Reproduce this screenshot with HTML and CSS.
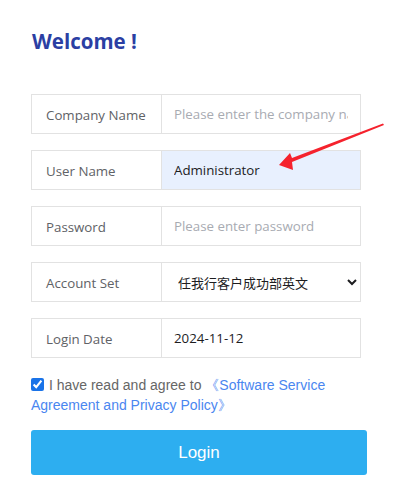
FILE: index.html
```html
<!DOCTYPE html>
<html lang="en">
<head>
    <meta charset="UTF-8">
    <meta name="viewport" content="width=device-width, initial-scale=1.0">
    <title>Login</title>
    <link rel="stylesheet" href="styles.css">
</head>
<body>
    <form action="" id="login">
        <h1 class="title">Welcome !</h1>
        <div class="rows">
            <div class="row">
                <label>Company Name</label>
                <input type="text" placeholder="Please enter the company name">
            </div>
            <div class="row">
                <label>User Name</label>
                <input class="filled" type="text" value="Administrator">
            </div>
            <div class="row">
                <label>Password</label>
                <input type="password" placeholder="Please enter password">
            </div>
            <div class="row">
                <label>Account Set</label>
                <select>
                    <option>任我行客户成功部英文</option>
                </select>
            </div>
            <div class="row">
                <label>Login Date</label>
                <input type="text" value="2024-11-12">
            </div>
        </div>
        <div class="agree">
            <input type="checkbox" checked>
            I have read and agree to <a href="#">《Software Service Agreement and Privacy Policy》</a>
        </div>
        <button class="submit" type="submit">Login</button>
    </form>
    <svg class="arrow" width="404" height="483" viewBox="0 0 404 483">
        <polygon fill="#f5222d" points="383,123.5 384,125 292,162 293,170 279,165 290,153 292,158"/>
    </svg>
</body>
</html>
```

FILE: styles.css
```css
*{
    box-sizing: border-box;
}
body{
    margin: 0;
    background: #fff;
    font-family: "Open Sans", "Noto Sans CJK SC", sans-serif;
}
#login{
    width: 336px;
    margin-left: 31px;
    padding-top: 27px;
}
.title{
    margin: 0 0 0 1px;
    font-size: 20.5px;
    line-height: 28px;
    font-weight: bold;
    color: #2b3fa3;
}
.rows{
    display: flex;
    flex-direction: column;
    gap: 16px;
    margin-top: 39px;
    width: 330px;
}
.row{
    display: flex;
    height: 40px;
    border: 1px solid #e2e2e2;
}
.row label{
    width: 130px;
    flex: none;
    border-right: 1px solid #e2e2e2;
    padding: 11px 0 0 14px;
    font-size: 13.3px;
    color: #606266;
}
.row input, .row select{
    flex: 1;
    min-width: 0;
    border: none;
    outline: none;
    padding: 0 12px;
    font-size: 13.3px;
    font-family: "Open Sans", "Noto Sans CJK SC", sans-serif;
    color: #1d1d1f;
    background: #fff;
}
.row input::placeholder{
    color: #a8abb2;
}
.row input.filled{
    background: #e8f0fe;
}
.row select{
    padding: 0 4px 0 12px;
    font-size: 13px;
    font-family: "Noto Sans CJK SC", sans-serif;
}
.agree{
    margin-top: 17px;
    font-family: "Liberation Sans", Arial, sans-serif;
    font-size: 14px;
    line-height: 20px;
    color: #666;
}
.agree input{
    width: 13px;
    height: 13px;
    margin: 0 1px 0 0;
    vertical-align: -1px;
    accent-color: #1a73e8;
}
.agree a{
    color: #4a86f0;
    text-decoration: none;
}
.submit{
    display: block;
    width: 336px;
    height: 45px;
    margin-top: 15px;
    border: none;
    border-radius: 3px;
    background: #2daef0;
    color: #fff;
    font-size: 17px;
    font-family: "Liberation Sans", Arial, sans-serif;
}
.arrow{
    position: absolute;
    left: 0;
    top: 0;
    pointer-events: none;
}
```
